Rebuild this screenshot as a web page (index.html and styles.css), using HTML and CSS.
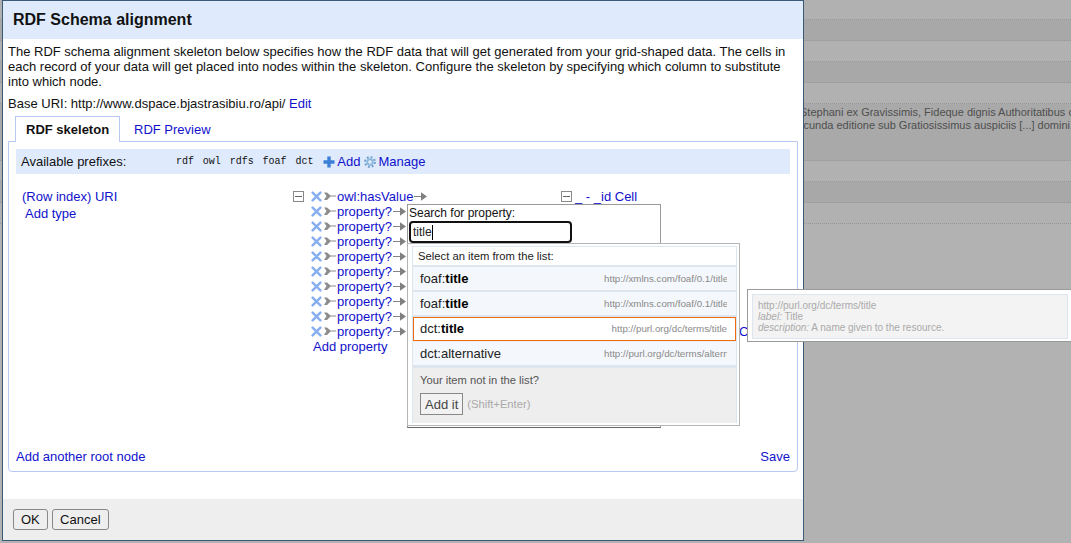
FILE: index.html
```html
<!DOCTYPE html>
<html lang="en">
<head>
<meta charset="utf-8">
<title>RDF Schema alignment</title>
<link rel="stylesheet" href="styles.css">
</head>
<body>
<svg class="defs" width="0" height="0" aria-hidden="true">
  <symbol id="i-minus" viewBox="0 0 11 11"><rect x=".5" y=".5" width="10" height="10" fill="#fff" stroke="#8a8a8a"/><path d="M2 5.5h7" stroke="#666" fill="none"/></symbol>
  <symbol id="i-x" viewBox="0 0 11 11"><path d="M1.6 1.6l7.8 7.8M9.4 1.6L1.6 9.4" stroke="#86aef0" stroke-width="2.4" stroke-linecap="round" fill="none"/></symbol>
  <symbol id="i-tail" viewBox="0 0 13 9"><path d="M0 .5l3 0 3.5 3 5.5 0 0 1-5.500 0-3.500 3.500-3 0 2.500-4z" fill="#8c8c8c"/></symbol>
  <symbol id="i-head" viewBox="0 0 14 9"><path d="M0 4h8V4.900H0z" fill="#777"/><path d="M7 .3l6 4.200-6 4.200z" fill="#808080"/></symbol>
  <symbol id="i-plus" viewBox="0 0 12 12"><path d="M6 .5v11M.5 6h11" stroke="#3b7fd6" stroke-width="3.400" fill="none"/></symbol>
  <symbol id="i-gear" viewBox="0 0 12 12"><circle cx="6" cy="6" r="3.700" fill="#8fb8dc"/><circle cx="6" cy="6" r="4.900" fill="none" stroke="#6d9fce" stroke-width="2" stroke-dasharray="1.900 1.950"/><circle cx="6" cy="6" r="1.700" fill="#e8f1fb"/></symbol>
</svg>

<div class="page">
  <div class="bg">
    <div class="bg-row bg-first"></div>
    <div class="bg-row bg-dark"></div>
    <div class="bg-row"></div>
    <div class="bg-row bg-dark"></div>
    <div class="bg-row"></div>
    <div class="bg-text">
      <div class="bg-line-a">Stephani ex Gravissimis, Fideque dignis Authoritatibus comprobata</div>
      <div class="bg-line-b">Secunda editione sub Gratiosissimus auspiciis [...] domini nostri</div>
    </div>
    <div class="bg-row"></div>
    <div class="bg-row bg-dark"></div>
    <div class="bg-row"></div>
  </div>

  <div class="dialog">
    <div class="dialog-head">RDF Schema alignment</div>
    <div class="dialog-body">
      <p class="intro">The RDF schema alignment skeleton below specifies how the RDF data that will get generated from your grid-shaped data. The cells in each record of your data will get placed into nodes within the skeleton. Configure the skeleton by specifying which column to substitute into which node.</p>
      <p class="base">Base URI: http://www.dspace.bjastrasibiu.ro/api/ <a class="link" href="#">Edit</a></p>
      <div class="tabs">
        <span class="tab tab-active">RDF skeleton</span>
        <a class="tab link" href="#">RDF Preview</a>
      </div>
      <div class="panel">
        <div class="prefix-bar">
          <span class="prefix-label">Available prefixes:</span>
          <code class="prefix">rdf</code><code class="prefix">owl</code><code class="prefix">rdfs</code><code class="prefix">foaf</code><code class="prefix">dct</code>
          <a class="link action" href="#"><svg class="ic-12"><use href="#i-plus"/></svg>Add</a>
          <a class="link action action-manage" href="#"><svg class="ic-12"><use href="#i-gear"/></svg>Manage</a>
        </div>
        <div class="tree">
          <div class="subject">
            <a class="link" href="#">(Row index) URI</a>
            <a class="link add-type" href="#">Add type</a>
          </div>
          <div class="props">
            <div class="prop">
              <span class="toggle"><svg class="ic-11"><use href="#i-minus"/></svg></span>
              <svg class="ic-11 x"><use href="#i-x"/></svg><svg class="tail"><use href="#i-tail"/></svg>
              <span class="prop-cell"><a class="link" href="#">owl:hasValue</a><svg class="head"><use href="#i-head"/></svg></span>
              <svg class="ic-11"><use href="#i-minus"/></svg>
              <a class="link target" href="#">_ - _id Cell</a>
            </div>
            <div class="prop"><span class="toggle"></span><svg class="ic-11 x"><use href="#i-x"/></svg><svg class="tail"><use href="#i-tail"/></svg><span class="prop-cell"><a class="link" href="#">property?</a><svg class="head"><use href="#i-head"/></svg></span></div>
            <div class="prop"><span class="toggle"></span><svg class="ic-11 x"><use href="#i-x"/></svg><svg class="tail"><use href="#i-tail"/></svg><span class="prop-cell"><a class="link" href="#">property?</a><svg class="head"><use href="#i-head"/></svg></span></div>
            <div class="prop"><span class="toggle"></span><svg class="ic-11 x"><use href="#i-x"/></svg><svg class="tail"><use href="#i-tail"/></svg><span class="prop-cell"><a class="link" href="#">property?</a><svg class="head"><use href="#i-head"/></svg></span></div>
            <div class="prop"><span class="toggle"></span><svg class="ic-11 x"><use href="#i-x"/></svg><svg class="tail"><use href="#i-tail"/></svg><span class="prop-cell"><a class="link" href="#">property?</a><svg class="head"><use href="#i-head"/></svg></span></div>
            <div class="prop"><span class="toggle"></span><svg class="ic-11 x"><use href="#i-x"/></svg><svg class="tail"><use href="#i-tail"/></svg><span class="prop-cell"><a class="link" href="#">property?</a><svg class="head"><use href="#i-head"/></svg></span></div>
            <div class="prop"><span class="toggle"></span><svg class="ic-11 x"><use href="#i-x"/></svg><svg class="tail"><use href="#i-tail"/></svg><span class="prop-cell"><a class="link" href="#">property?</a><svg class="head"><use href="#i-head"/></svg></span></div>
            <div class="prop"><span class="toggle"></span><svg class="ic-11 x"><use href="#i-x"/></svg><svg class="tail"><use href="#i-tail"/></svg><span class="prop-cell"><a class="link" href="#">property?</a><svg class="head"><use href="#i-head"/></svg></span></div>
            <div class="prop"><span class="toggle"></span><svg class="ic-11 x"><use href="#i-x"/></svg><svg class="tail"><use href="#i-tail"/></svg><span class="prop-cell"><a class="link" href="#">property?</a><svg class="head"><use href="#i-head"/></svg></span></div>
            <div class="prop"><span class="toggle"></span><svg class="ic-11 x"><use href="#i-x"/></svg><svg class="tail"><use href="#i-tail"/></svg><span class="prop-cell"><a class="link" href="#">property?</a><svg class="head"><use href="#i-head"/></svg></span><a class="link target-far" href="#">Cell</a></div>
            <a class="link add-prop" href="#">Add property</a>
          </div>
        </div>
        <div class="panel-foot">
          <a class="link" href="#">Add another root node</a>
          <a class="link" href="#">Save</a>
        </div>
      </div>
    </div>
    <div class="dialog-foot">
      <button class="btn" type="button">OK</button>
      <button class="btn btn-cancel" type="button">Cancel</button>
    </div>

    <div class="search-pop">
      <div class="search-label">Search for property:</div>
      <div class="search-input"><span class="caret">title</span></div>
    </div>

    <div class="suggest">
      <div class="suggest-inner">
        <div class="suggest-status">Select an item from the list:</div>
        <div class="item"><span>foaf:<b>title</b></span><span class="item-url">http://xmlns.com/foaf/0.1/title</span></div>
        <div class="item"><span>foaf:<b>title</b></span><span class="item-url">http://xmlns.com/foaf/0.1/title</span></div>
        <div class="item item-on"><span>dct:<b>title</b></span><span class="item-url">http://purl.org/dc/terms/title</span></div>
        <div class="item item-last"><span>dct:alternative</span><span class="item-url">http://purl.org/dc/terms/alternative</span></div>
        <div class="suggest-foot">
          <div class="not-in">Your item not in the list?</div>
          <div class="add-line"><button class="btn-add" type="button">Add it</button><span class="hint">(Shift+Enter)</span></div>
        </div>
      </div>
    </div>
  </div>

  <div class="flyout">
    <div class="flyout-inner">
      <div>http://purl.org/dc/terms/title</div>
      <div><i>label:</i> Title</div>
      <div><i>description:</i> A name given to the resource.</div>
    </div>
  </div>
</div>
</body>
</html>
```

FILE: styles.css
```css
* { box-sizing: border-box; }
html, body { margin: 0; height: 100%; }
body { font: 13px/15px "Liberation Sans", Arial, sans-serif; color: #111; overflow: hidden; background: #b2b2b2; }
.defs { position: absolute; }
svg { display: block; flex: none; }
p { margin: 0; }
a { text-decoration: none; }
.link { color: #11c; }

.page { position: relative; width: 1071px; height: 543px; overflow: hidden; }

/* dimmed page behind the dialog */
.bg-row { height: 21px; border-bottom: 1px dotted #979797; background: #b1b1b1; }
.bg-first { height: 20px; }
.bg-dark { background: #a8a8a8; }
.bg-text { height: 57px; border-bottom: 1px dotted #979797; padding-top: 2px; background: #a9a9a9; font-size: 11px; line-height: 13px; color: #4e4e4e; white-space: nowrap; }
.bg-line-a { padding-left: 800px; }
.bg-line-b { padding-left: 790px; }

/* dialog */
.dialog { position: absolute; left: 2px; top: 0; width: 802px; height: 541px; border: 1px solid #3b5a78; background: #fff; display: flex; flex-direction: column; }
.dialog-head { height: 38px; background: #dfebfd; padding: 0 10px; font-size: 16px; line-height: 38px; font-weight: bold; color: #111; flex: none; }
.dialog-body { flex: 1; padding: 5px 5px 0; display: flex; flex-direction: column; }
.base { margin-top: 7px; }
.tabs { display: flex; margin: 5px 0 0 7px; height: 26px; position: relative; z-index: 1; }
.tab { padding: 5px 10px 0; white-space: nowrap; }
.tab-active { width: 105px; height: 26px; font-weight: bold; border: 1px solid #b9c8f2; border-bottom: 0; background: #fff; }
.tab.link { padding-left: 14px; padding-top: 6px; }
.panel { height: 331px; margin-top: -1px; border: 1px solid #b9c8f2; border-radius: 0 0 4px 4px; padding: 7px 7px 7px; display: flex; flex-direction: column; }
.prefix-bar { height: 25px; background: #dfebfd; padding-left: 5px; display: flex; align-items: center; }
.prefix-label { width: 155px; }
.prefix { font: 10px/12px "Liberation Mono", monospace; margin-right: 8.85px; color: #111; }
.action { display: flex; align-items: center; gap: 2px; margin-left: 1px; }
.action-manage { margin-left: 4px; }
.ic-12 { width: 12px; height: 12px; }
.ic-11 { width: 11px; height: 11px; }

.tree { display: flex; margin-top: 15px; height: 0; flex: 1; }
.subject { width: 277px; padding-left: 6px; display: flex; flex-direction: column; }
.add-type { margin: 2px 0 0 3px; }
.props { display: flex; flex-direction: column; }
.prop { height: 15px; display: flex; align-items: center; }
.toggle { width: 18px; flex: none; }
.x { margin-right: 2px; }
.tail { width: 13px; height: 9px; }
.head { width: 14px; height: 9px; margin-left: 1px; }
.prop-cell { width: 224px; display: flex; align-items: center; flex: none; }
.target { margin-left: 3px; white-space: pre; }
.target-far { margin-left: 178px; }
.add-prop { margin: 0 0 0 20px; }
.panel-foot { display: flex; justify-content: space-between; }

.dialog-foot { height: 41px; flex: none; background: #eee; padding: 10px; display: flex; gap: 4px; margin-top: 26px; }
.btn { height: 21px; padding: 0 7px; font: 13px/15px "Liberation Sans", Arial, sans-serif; color: #111; background: #eee; border: 1px solid #888; border-radius: 3px; }
.btn-cancel { width: 57px; }

/* property search popup */
.search-pop { position: absolute; left: 404px; top: 203px; width: 254px; height: 224px; background: #fff; border: 1px solid #999; border-bottom-color: #666; padding: 1px 0 0 1px; font-size: 12px; }
.search-label { height: 15px; }
.search-input { width: 163px; height: 22px; border: 2px solid #111; border-radius: 4px; padding: 2px 0 0 2px; font-size: 12px; line-height: 15px; color: #222; }
.caret { border-right: 1px solid #000; display: inline-block; height: 15px; }

.suggest { position: absolute; left: 404px; top: 242px; width: 333px; height: 183px; background: #fff; border: 1px solid #b5b5b5; padding: 2px 2px 2px 4px; }
.suggest-inner { height: 100%; border: 1px solid #dde6ee; border-bottom: 0; display: flex; flex-direction: column; background: #eee; }
.suggest-status { height: 20px; background: #fff; border-bottom: 2px solid #dde6ee; padding: 2px 0 0 5px; font-size: 11.25px; line-height: 15px; color: #222; }
.item { height: 25px; flex: none; background: #f4f7fb; border-bottom: 2px solid #dde6ee; padding: 0 9px 0 7px; display: flex; justify-content: space-between; align-items: center; line-height: 23px; color: #222; }
.item b { color: #000; }
.item-on { background: #fff; border: 1px solid #f06a0f; height: 24px; margin-bottom: 1px; padding: 0 8px 1px 6px; }
.item-last { height: 26px; border-bottom-width: 3px; }
.item-url { font-size: 9.75px; color: #8a8a8a; max-width: 123px; overflow: hidden; white-space: nowrap; }
.suggest-foot { padding: 5px 7px 0; color: #555; font-size: 11.2px; }
.not-in { line-height: 15px; }
.add-line { display: flex; align-items: center; margin-top: 5px; }
.btn-add { height: 22px; padding: 0 4px; font: 13px/15px "Liberation Sans", Arial, sans-serif; color: #444; background: #f2f2f2; border: 1px solid #888; border-radius: 0; }
.hint { margin-left: 4px; color: #aaa; }

/* flyout */
.flyout { position: absolute; left: 747px; top: 289px; width: 340px; height: 53px; background: #fff; border: 1px solid #999; padding: 4px; }
.flyout-inner { width: 316px; height: 45px; background: #f3f3f3; border: 1px solid #dde6ee; padding: 5px 5px; font-size: 10px; line-height: 11px; color: #aaa; }
.flyout-inner i { color: #aaa; }
```
